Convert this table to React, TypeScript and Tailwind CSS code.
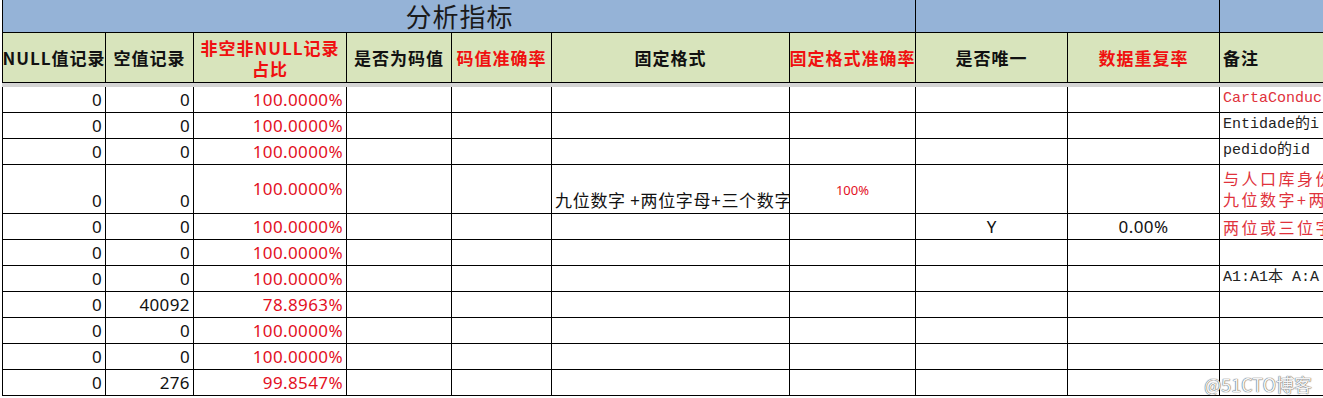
import type { ReactNode } from "react";

// column widths, border-box, each cell carries its own right border
const W = [
  "w-[104px] border-l",
  "w-[88px]",
  "w-[153px]",
  "w-[105px]",
  "w-[100px]",
  "w-[238px]",
  "w-[126px]",
  "w-[152px]",
  "w-[152px]",
];

const RED = "text-[#e3101e]";
const NOTE_RED = "text-[#e0323c]";

function Cell({ i, className = "", children }: { i: number; className?: string; children?: ReactNode }) {
  const w = i < 9 ? `${W[i]} shrink-0 border-r` : "min-w-0 flex-1";
  return (
    <div className={`${w} flex overflow-hidden whitespace-nowrap border-black ${className}`}>
      {children}
    </div>
  );
}

type Row = {
  nul: string;
  empty: string;
  ratio: string;
  note?: string;
  noteRed?: boolean;
};

const rows: Row[] = [
  { nul: "0", empty: "0", ratio: "100.0000%", note: "CartaConduc", noteRed: true },
  { nul: "0", empty: "0", ratio: "100.0000%", note: "Entidade的i" },
  { nul: "0", empty: "0", ratio: "100.0000%", note: "pedido的id" },
];

const rowsAfter: Row[] = [
  { nul: "0", empty: "0", ratio: "100.0000%" },
  { nul: "0", empty: "0", ratio: "100.0000%", note: "A1:A1本 A:A" },
  { nul: "0", empty: "40092", ratio: "78.8963%" },
  { nul: "0", empty: "0", ratio: "100.0000%" },
  { nul: "0", empty: "0", ratio: "100.0000%" },
  { nul: "0", empty: "276", ratio: "99.8547%" },
];

const num = "items-end justify-end pr-[3px] pb-[1px] text-[17px] leading-[22px] tracking-[0.4px]";
const note = "items-center pl-[3px] font-['Liberation_Mono','Noto_Sans_CJK_SC',monospace] text-[15px]";
const cjkNote = "pl-[3px] font-['Noto_Sans_CJK_SC',sans-serif] text-[16px] tracking-[2.5px]";

function DataRow({ r }: { r: Row }) {
  return (
    <div className="flex h-[26px] border-b border-black">
      <Cell i={0} className={num}>{r.nul}</Cell>
      <Cell i={1} className={num}>{r.empty}</Cell>
      <Cell i={2} className={`${num} ${RED}`}>{r.ratio}</Cell>
      <Cell i={3} />
      <Cell i={4} />
      <Cell i={5} />
      <Cell i={6} />
      <Cell i={7} />
      <Cell i={8} />
      <Cell i={9} className={`${note} ${r.noteRed ? NOTE_RED : "text-[#222]"}`}>
        {r.note}
      </Cell>
    </div>
  );
}

function Head({ i, red = false, left = false, children }: { i: number; red?: boolean; left?: boolean; children: ReactNode }) {
  return (
    <Cell
      i={i}
      className={`items-center ${left ? "justify-start pl-[3px]" : "justify-center"} text-center text-[17px] font-bold leading-[21px] tracking-[1px] ${red ? "text-[#f01010]" : "text-[#111]"}`}
    >
      {children}
    </Cell>
  );
}

export default function App() {
  return (
    <div className="relative h-[398px] w-[1323px] overflow-hidden bg-white font-['Noto_Sans','Noto_Sans_CJK_SC',sans-serif] text-[#111]">
      <div className="ml-[2px]">
        {/* title band */}
        <div className="flex h-[33px] border-b border-black bg-[#95b3d7]">
          <div className="flex w-[914px] shrink-0 items-center justify-center border-x border-black pl-[1px] font-['Noto_Sans_CJK_SC',serif] text-[26px] leading-[32px] tracking-[1px] text-[#1a1a1a]">
            分析指标
          </div>
          <div className="w-[304px] shrink-0 border-r border-black" />
          <div className="flex-1" />
        </div>

        {/* column headers */}
        <div className="flex h-[50px] border-b border-black bg-[#d8e4bc] font-['Noto_Sans_CJK_SC',sans-serif]">
          <Head i={0}>NULL值记录</Head>
          <Head i={1}>空值记录</Head>
          <Head i={2} red>
            非空非NULL记录
            <br />
            占比
          </Head>
          <Head i={3}>是否为码值</Head>
          <Head i={4} red>码值准确率</Head>
          <Head i={5}>固定格式</Head>
          <Head i={6} red>固定格式准确率</Head>
          <Head i={7}>是否唯一</Head>
          <Head i={8} red>数据重复率</Head>
          <Head i={9} left>备注</Head>
        </div>

        {/* frozen pane line */}
        <div className="h-[4px] bg-[#d4d4d4]" />

        {rows.map((r, k) => (
          <DataRow key={k} r={r} />
        ))}

        {/* tall row */}
        <div className="flex h-[49px] border-b border-black">
          <Cell i={0} className={num}>0</Cell>
          <Cell i={1} className={num}>0</Cell>
          <Cell i={2} className={`items-center justify-end pr-[3px] pb-[1px] text-[17px] tracking-[0.4px] ${RED}`}>100.0000%</Cell>
          <Cell i={3} />
          <Cell i={4} />
          <Cell i={5} className="items-end pb-[1px] pl-[3px] font-['Noto_Sans_CJK_SC',sans-serif] text-[17px] leading-[24px] tracking-[0.7px]">
            九位数字 +两位字母+三个数字
          </Cell>
          <Cell i={6} className={`items-center justify-center pt-[4px] text-[13px] ${RED}`}>100%</Cell>
          <Cell i={7} />
          <Cell i={8} />
          <Cell i={9} className={`flex-col justify-center leading-[21px] ${cjkNote} ${NOTE_RED}`}>
            <span>与人口库身份</span>
            <span>九位数字+两</span>
          </Cell>
        </div>

        {/* unique row */}
        <div className="flex h-[26px] border-b border-black">
          <Cell i={0} className={num}>0</Cell>
          <Cell i={1} className={num}>0</Cell>
          <Cell i={2} className={`${num} ${RED}`}>100.0000%</Cell>
          <Cell i={3} />
          <Cell i={4} />
          <Cell i={5} />
          <Cell i={6} />
          <Cell i={7} className="items-end justify-center pb-[1px] text-[17px] leading-[22px]">Y</Cell>
          <Cell i={8} className="items-end justify-center pb-[1px] text-[17px] leading-[22px] tracking-[0.4px]">0.00%</Cell>
          <Cell i={9} className={`items-center ${cjkNote} ${NOTE_RED}`}>
            两位或三位字
          </Cell>
        </div>

        {rowsAfter.map((r, k) => (
          <DataRow key={k} r={r} />
        ))}
      </div>

      {/* watermark */}
      <div className="absolute bottom-[5px] right-[11px] font-['Noto_Sans_CJK_SC',sans-serif] text-[18px] leading-none text-[#f4f4f4] [text-shadow:0_0_1px_#555,0_0_1px_#555]">
        @51CTO博客
      </div>
    </div>
  );
}
